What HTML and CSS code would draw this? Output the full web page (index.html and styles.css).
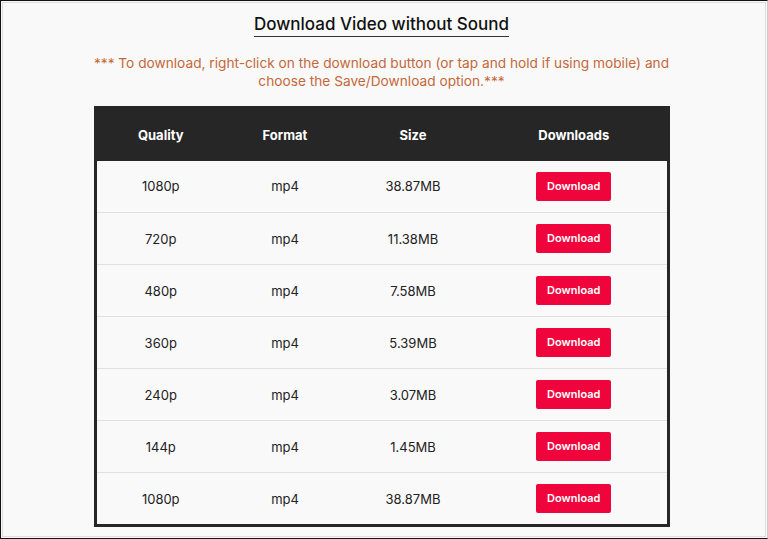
FILE: index.html
```html
<!DOCTYPE html>
<html lang="en">

<head>
  <meta charset="UTF-8">
  <meta name="viewport" content="width=device-width, initial-scale=1.0">
  <title>Download Video without Sound</title>
  <link rel="stylesheet" href="styles.css">
</head>

<body>
  <div class="frame">
    <header>
      <h2>Download Video without Sound</h2>
      <p class="note">*** To download, right-click on the download button (or tap and hold if using mobile) and<br>choose the Save/Download option.***</p>
    </header>

    <table class="downloads">
      <thead>
        <tr>
          <th>Quality</th>
          <th>Format</th>
          <th>Size</th>
          <th>Downloads</th>
        </tr>
      </thead>
      <tbody>
        <tr><td>1080p</td><td>mp4</td><td>38.87MB</td><td><a class="btn" href="#">Download</a></td></tr>
        <tr><td>720p</td><td>mp4</td><td>11.38MB</td><td><a class="btn" href="#">Download</a></td></tr>
        <tr><td>480p</td><td>mp4</td><td>7.58MB</td><td><a class="btn" href="#">Download</a></td></tr>
        <tr><td>360p</td><td>mp4</td><td>5.39MB</td><td><a class="btn" href="#">Download</a></td></tr>
        <tr><td>240p</td><td>mp4</td><td>3.07MB</td><td><a class="btn" href="#">Download</a></td></tr>
        <tr><td>144p</td><td>mp4</td><td>1.45MB</td><td><a class="btn" href="#">Download</a></td></tr>
        <tr><td>1080p</td><td>mp4</td><td>38.87MB</td><td><a class="btn" href="#">Download</a></td></tr>
      </tbody>
    </table>
  </div>
</body>

</html>
```

FILE: styles.css
```css
* {
  margin: 0;
  box-sizing: border-box;
}

html,
body {
  height: 100%;
}

body {
  font-family: 'Inter', 'Noto Sans', sans-serif;
  background: #fff;
  color: #222;
}

.frame {
  height: 539px;
  padding-right: 5px;
  border: 1px solid #111;
  border-right-color: #ccc;
  outline: 1px solid #ddd;
  outline-offset: -3px;
  background: #f9f9f9;
  display: flex;
  flex-direction: column;
  align-items: center;
}

header {
  display: flex;
  flex-direction: column;
  align-items: center;
  padding-top: 12px;
}

header h2 {
  font-size: 17px;
  font-weight: 500;
  line-height: 22px;
  color: #111;
  padding-bottom: 1px;
  border-bottom: 1px solid #333;
}

.note {
  margin-top: 17px;
  font-size: 13.7px;
  line-height: 18px;
  color: #c4683a;
  text-align: center;
  white-space: nowrap;
}

.downloads {
  margin-top: 16px;
  width: 576px;
  border-collapse: collapse;
  border: 3px solid #262626;
  font-size: 13px;
  text-align: center;
}

.downloads th {
  background: #262626;
  color: #fff;
  font-weight: 700;
  height: 53px;
  padding: 0;
}

.downloads th:nth-child(1) { width: 130px; }
.downloads th:nth-child(2) { width: 120px; }
.downloads th:nth-child(3) { width: 136px; }

.downloads td {
  height: 52px;
  padding: 0;
  border-top: 1px solid #e0e0e0;
  background: #f9f9f9;
}

.downloads tbody tr:first-child td {
  border-top: none;
}

.downloads tbody tr:last-child td {
  height: 53px;
}

.btn {
  display: inline-block;
  width: 75px;
  line-height: 29px;
  background: #f0043c;
  color: #fff;
  font-size: 11px;
  font-weight: 600;
  text-decoration: none;
  border-radius: 2px;
}
```
